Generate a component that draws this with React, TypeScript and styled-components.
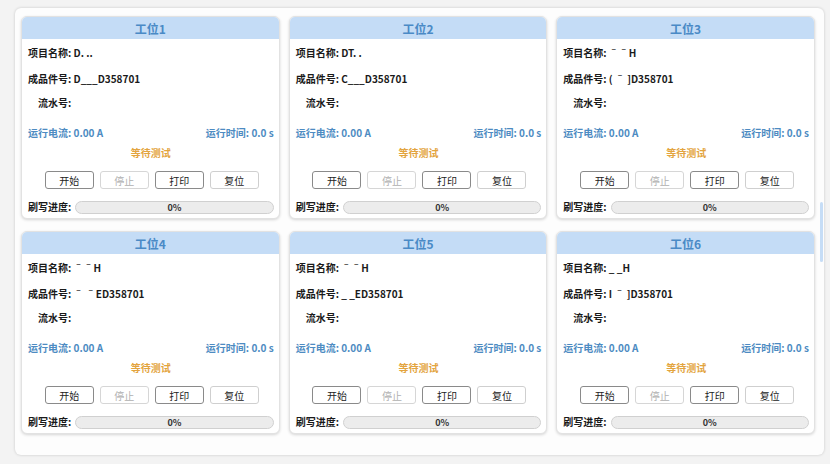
import React from 'react';
import styled, { createGlobalStyle } from 'styled-components';

const GlobalStyle = createGlobalStyle`
  html, body {
    margin: 0;
    padding: 0;
    background: #f3f3f3;
  }
  body {
    font-family: "Noto Sans CJK SC", "Noto Sans", sans-serif;
  }
`;

const Page = styled.div`
  width: 830px;
  height: 464px;
  padding: 8px 6px 9px 15px;
  box-sizing: border-box;
`;

const Panel = styled.div`
  position: relative;
  height: 100%;
  box-sizing: border-box;
  background: #fdfdfd;
  border-radius: 6px;
  box-shadow: 0 0 3px rgba(0, 0, 0, 0.18);
  padding: 8px 9px 0 6px;
`;

const ScrollThumb = styled.div`
  position: absolute;
  right: 1px;
  top: 194px;
  width: 3px;
  height: 60px;
  border-radius: 2px;
  background: #c6ddf6;
`;

const Grid = styled.div`
  display: grid;
  grid-template-columns: repeat(3, 1fr);
  column-gap: 9px;
  row-gap: 12px;
`;

const Card = styled.div`
  background: #fff;
  border: 1px solid #e2e2e2;
  border-radius: 6px;
  box-shadow: 0 1px 3px rgba(0, 0, 0, 0.16);
  overflow: hidden;
  display: flex;
  flex-direction: column;
`;

const CardHeader = styled.div`
  height: 22px;
  background: #c4dcf6;
  color: #4a8ac6;
  font-size: 12px;
  font-weight: 700;
  display: flex;
  align-items: center;
  justify-content: center;
`;

const CardBody = styled.div`
  padding: 7px 5px 4px 6px;
  display: flex;
  flex-direction: column;
`;

const InfoRow = styled.div<{ $indent?: boolean; $gap: number }>`
  height: 14px;
  line-height: 14px;
  font-size: 10px;
  font-weight: 700;
  color: #1a1a1a;
  margin-bottom: ${(p) => p.$gap}px;
  padding-left: ${(p) => (p.$indent ? '10px' : '0')};
  white-space: nowrap;
`;

const MetricRow = styled.div`
  height: 14px;
  line-height: 14px;
  display: flex;
  justify-content: space-between;
  font-size: 10px;
  font-weight: 700;
  color: #4d8bc2;
`;

const Status = styled.div`
  margin-top: 6px;
  height: 14px;
  line-height: 14px;
  text-align: center;
  font-size: 10px;
  font-weight: 700;
  color: #e3a43e;
`;

const ButtonRow = styled.div`
  margin-top: 11px;
  display: flex;
  justify-content: center;
  gap: 6px;
  padding-left: 2px;
`;

const Btn = styled.button<{ $soft?: boolean }>`
  width: 49px;
  height: 18px;
  padding: 0;
  box-sizing: border-box;
  background: #fff;
  border: 1px solid ${(p) => (p.$soft ? '#cfcfcf' : '#8a8a8a')};
  border-radius: 3px;
  font-family: inherit;
  font-size: 10px;
  color: #222;
  &:disabled {
    border-color: #d6d6d6;
    color: #b0b0b0;
  }
`;

const ProgressRow = styled.div`
  margin-top: 11px;
  display: flex;
  align-items: center;
  gap: 4px;
`;

const ProgressLabel = styled.span`
  font-size: 10px;
  line-height: 14px;
  font-weight: 700;
  color: #1a1a1a;
  white-space: nowrap;
`;

const ProgressBar = styled.div`
  flex: 1;
  height: 13px;
  box-sizing: border-box;
  border: 1px solid #d0d0d0;
  border-radius: 7px;
  background: #ececec;
  display: flex;
  align-items: center;
  justify-content: center;
  font-size: 9px;
  font-weight: 700;
  color: #333;
`;

type Station = { id: number; project: string; part: string };

const stations: Station[] = [
  { id: 1, project: 'D. ..', part: 'D___D358701' },
  { id: 2, project: 'DT. .', part: 'C___D358701' },
  { id: 3, project: 'ˉˉH', part: '( ˉ ]D358701' },
  { id: 4, project: 'ˉˉH', part: 'ˉ ˉED358701' },
  { id: 5, project: 'ˉˉH', part: '_ _ED358701' },
  { id: 6, project: '_ _H', part: 'I ˉ ]D358701' },
];

const StationCard = ({ s }: { s: Station }) => (
  <Card>
    <CardHeader>工位{s.id}</CardHeader>
    <CardBody>
      <InfoRow $gap={12}>项目名称: {s.project}</InfoRow>
      <InfoRow $gap={10}>成品件号: {s.part}</InfoRow>
      <InfoRow $gap={16} $indent>
        流水号:
      </InfoRow>
      <MetricRow>
        <span>运行电流: 0.00 A</span>
        <span>运行时间: 0.0 s</span>
      </MetricRow>
      <Status>等待测试</Status>
      <ButtonRow>
        <Btn>开始</Btn>
        <Btn disabled>停止</Btn>
        <Btn>打印</Btn>
        <Btn $soft>复位</Btn>
      </ButtonRow>
      <ProgressRow>
        <ProgressLabel>刷写进度:</ProgressLabel>
        <ProgressBar>0%</ProgressBar>
      </ProgressRow>
    </CardBody>
  </Card>
);

export default function App() {
  return (
    <>
      <GlobalStyle />
      <Page>
        <Panel>
          <Grid>
            {stations.map((s) => (
              <StationCard key={s.id} s={s} />
            ))}
          </Grid>
          <ScrollThumb />
        </Panel>
      </Page>
    </>
  );
}
